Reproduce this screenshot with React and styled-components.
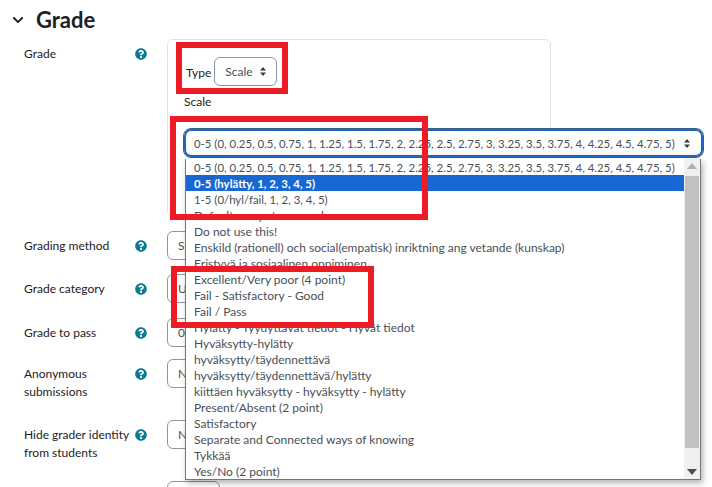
import React from 'react';
import styled, { createGlobalStyle } from 'styled-components';
import { FaChevronDown, FaQuestionCircle } from 'react-icons/fa';

const GlobalStyle = createGlobalStyle`
  html, body {
    margin: 0;
    padding: 0;
    background: #fff;
  }
  body {
    font-family: Lato, "Noto Sans", sans-serif;
    color: #1d2125;
  }
`;

const Page = styled.div`
  position: relative;
  width: 712px;
  height: 487px;
  overflow: hidden;
`;

const Header = styled.div`
  display: flex;
  align-items: center;
  gap: 12px;
  height: 27px;
  padding: 6px 0 6px 12px;
  color: #1d2125;
`;

const Title = styled.h3`
  margin: 0;
  font-size: 22px;
  font-weight: 700;
  line-height: 27px;
`;

const Row = styled.div`
  display: grid;
  grid-template-columns: 111px 32px 1fr;
  padding-left: 24px;
  margin-bottom: ${(p) => p.$after}px;
`;

const Label = styled.div`
  font-size: 12px;
  line-height: 18px;
  padding-top: 6px;
  white-space: pre-line;
`;

const HelpCell = styled.div`
  display: flex;
  padding-top: 9px;
  color: #0b7a93;
  font-size: 12px;
`;

const Card = styled.div`
  box-sizing: border-box;
  width: 384px;
  height: 178px;
  padding: 17px 15px 0;
  border: 1px solid #dee2e6;
  border-radius: 6px;
  font-size: 12px;
`;

const TypeLine = styled.div`
  display: flex;
  align-items: flex-end;
  gap: 3px;
  padding-left: 3px;
`;

const TypeLabel = styled.span`
  line-height: 18px;
  padding-bottom: 4px;
`;

const ScaleLabel = styled.div`
  line-height: 18px;
  margin: 7px 0 0 1px;
`;

const Select = styled.div`
  box-sizing: border-box;
  display: flex;
  align-items: center;
  justify-content: space-between;
  width: ${(p) => p.$width}px;
  height: 29px;
  padding: 0 10px;
  background: #fff;
  border: 1px solid #8f959e;
  border-radius: 6px;
  color: #495057;
  font-size: 12px;
`;

const ListAnchor = styled.div`
  position: relative;
  width: 521px;
  margin-top: 17px;
`;

const FocusSelect = styled.div`
  box-sizing: border-box;
  display: flex;
  align-items: center;
  justify-content: space-between;
  height: 30px;
  padding: 0 13px 0 10px;
  background: linear-gradient(#fff 70%, #f1f1f1);
  border: 1px solid #3f5f82;
  border-radius: 8px;
  box-shadow: inset 0 0 0 2px #1d66c0;
  color: #495057;
  font-size: 11.4px;
  white-space: nowrap;
`;

const Dropdown = styled.div`
  position: absolute;
  z-index: 2;
  top: 31px;
  left: 2px;
  box-sizing: border-box;
  display: flex;
  width: 516px;
  height: 321px;
  background: #fff;
  border: 1px solid #767676;
  border-top: 0;
  box-shadow: 2px 3px 6px rgba(0, 0, 0, 0.3);
`;

const OptionList = styled.ul`
  flex: 1;
  min-width: 0;
  margin: 0;
  padding: 0;
  overflow: hidden;
  list-style: none;
`;

const Option = styled.li`
  height: 16px;
  padding-left: 8px;
  background: ${(p) => (p.$selected ? '#1967d2' : 'transparent')};
  color: ${(p) => (p.$selected ? '#fff' : '#495057')};
  font-size: ${(p) => (p.$numeric ? '11.4px' : '12px')};
  font-weight: ${(p) => (p.$selected ? 700 : 400)};
  line-height: 17px;
  white-space: nowrap;
`;

const Scrollbar = styled.div`
  flex: none;
  display: flex;
  flex-direction: column;
  align-items: center;
  width: 16px;
  background: #f0f0f0;
`;

const ScrollArrow = styled.svg`
  flex: none;
  width: 16px;
  height: 17px;
`;

const ScrollThumb = styled.div`
  width: 14px;
  height: 272px;
  margin-bottom: auto;
  background: #c1c1c1;
`;

const Highlight = styled.div`
  position: absolute;
  z-index: 3;
  left: ${(p) => p.$x}px;
  top: ${(p) => p.$y}px;
  box-sizing: border-box;
  width: ${(p) => p.$w}px;
  height: ${(p) => p.$h}px;
  border: 6px solid #ed1c24;
`;

const UpDown = () => (
  <svg width="6" height="9" viewBox="0 0 6 9">
    <path d="M3 0 6 3.6H0Z M3 9 0 5.4H6Z" fill="#343a40" />
  </svg>
);

const scaleOptions = [
  '0-5 (0, 0.25, 0.5, 0.75, 1, 1.25, 1.5, 1.75, 2, 2.25, 2.5, 2.75, 3, 3.25, 3.5, 3.75, 4, 4.25, 4.5, 4.75, 5)',
  '0-5 (hylätty, 1, 2, 3, 4, 5)',
  '1-5 (0/hyl/fail, 1, 2, 3, 4, 5)',
  'Default competence scale',
  'Do not use this!',
  'Enskild (rationell) och social(empatisk) inriktning ang vetande (kunskap)',
  'Eristyvä ja sosiaalinen oppiminen',
  'Excellent/Very poor (4 point)',
  'Fail - Satisfactory - Good',
  'Fail / Pass',
  'Hylätty - Tyydyttävät tiedot - Hyvät tiedot',
  'Hyväksytty-hylätty',
  'hyväksytty/täydennettävä',
  'hyväksytty/täydennettävä/hylätty',
  'kiittäen hyväksytty - hyväksytty - hylätty',
  'Present/Absent (2 point)',
  'Satisfactory',
  'Separate and Connected ways of knowing',
  'Tykkää',
  'Yes/No (2 point)',
];

const settings = [
  { label: 'Grading method', value: 'Simple direct grading', after: 14 },
  { label: 'Grade category', value: 'Uncategorised', after: 15 },
  { label: 'Grade to pass', value: '0', after: 12 },
  { label: 'Anonymous\nsubmissions', value: 'No', after: 19 },
  { label: 'Hide grader identity\nfrom students', value: 'No', after: 19 },
];

function SettingRow({ label, value, after }) {
  return (
    <Row $after={after}>
      <Label>{label}</Label>
      <HelpCell>
        <FaQuestionCircle />
      </HelpCell>
      <Select $width={300}>{value}</Select>
    </Row>
  );
}

export default function App() {
  return (
    <Page>
      <GlobalStyle />
      <Header>
        <FaChevronDown size={12} />
        <Title>Grade</Title>
      </Header>
      <Row $after={14}>
        <Label>Grade</Label>
        <HelpCell>
          <FaQuestionCircle />
        </HelpCell>
        <Card>
          <TypeLine>
            <TypeLabel>Type</TypeLabel>
            <Select $width={63}>
              Scale
              <UpDown />
            </Select>
          </TypeLine>
          <ScaleLabel>Scale</ScaleLabel>
          <ListAnchor>
            <FocusSelect>
              {scaleOptions[0]}
              <UpDown />
            </FocusSelect>
            <Dropdown>
              <OptionList>
                {scaleOptions.map((option, i) => (
                  <Option key={option} $selected={i === 1} $numeric={i < 3}>
                    {option}
                  </Option>
                ))}
              </OptionList>
              <Scrollbar>
                <ScrollArrow viewBox="0 0 16 17">
                  <path d="M8 4 13 10H3Z" fill="#b0b0b0" />
                </ScrollArrow>
                <ScrollThumb />
                <ScrollArrow viewBox="0 0 16 17">
                  <path d="M8 13 3 7H13Z" fill="#505050" />
                </ScrollArrow>
              </Scrollbar>
            </Dropdown>
          </ListAnchor>
        </Card>
      </Row>
      {settings.map((s) => (
        <SettingRow key={s.label} {...s} />
      ))}
      <Row $after={0}>
        <div />
        <div />
        <Select $width={53} />
      </Row>
      <Highlight $x={176} $y={42} $w={112} $h={52} />
      <Highlight $x={170} $y={116} $w={258} $h={104} />
      <Highlight $x={171} $y={266} $w={203} $h={62} />
    </Page>
  );
}
